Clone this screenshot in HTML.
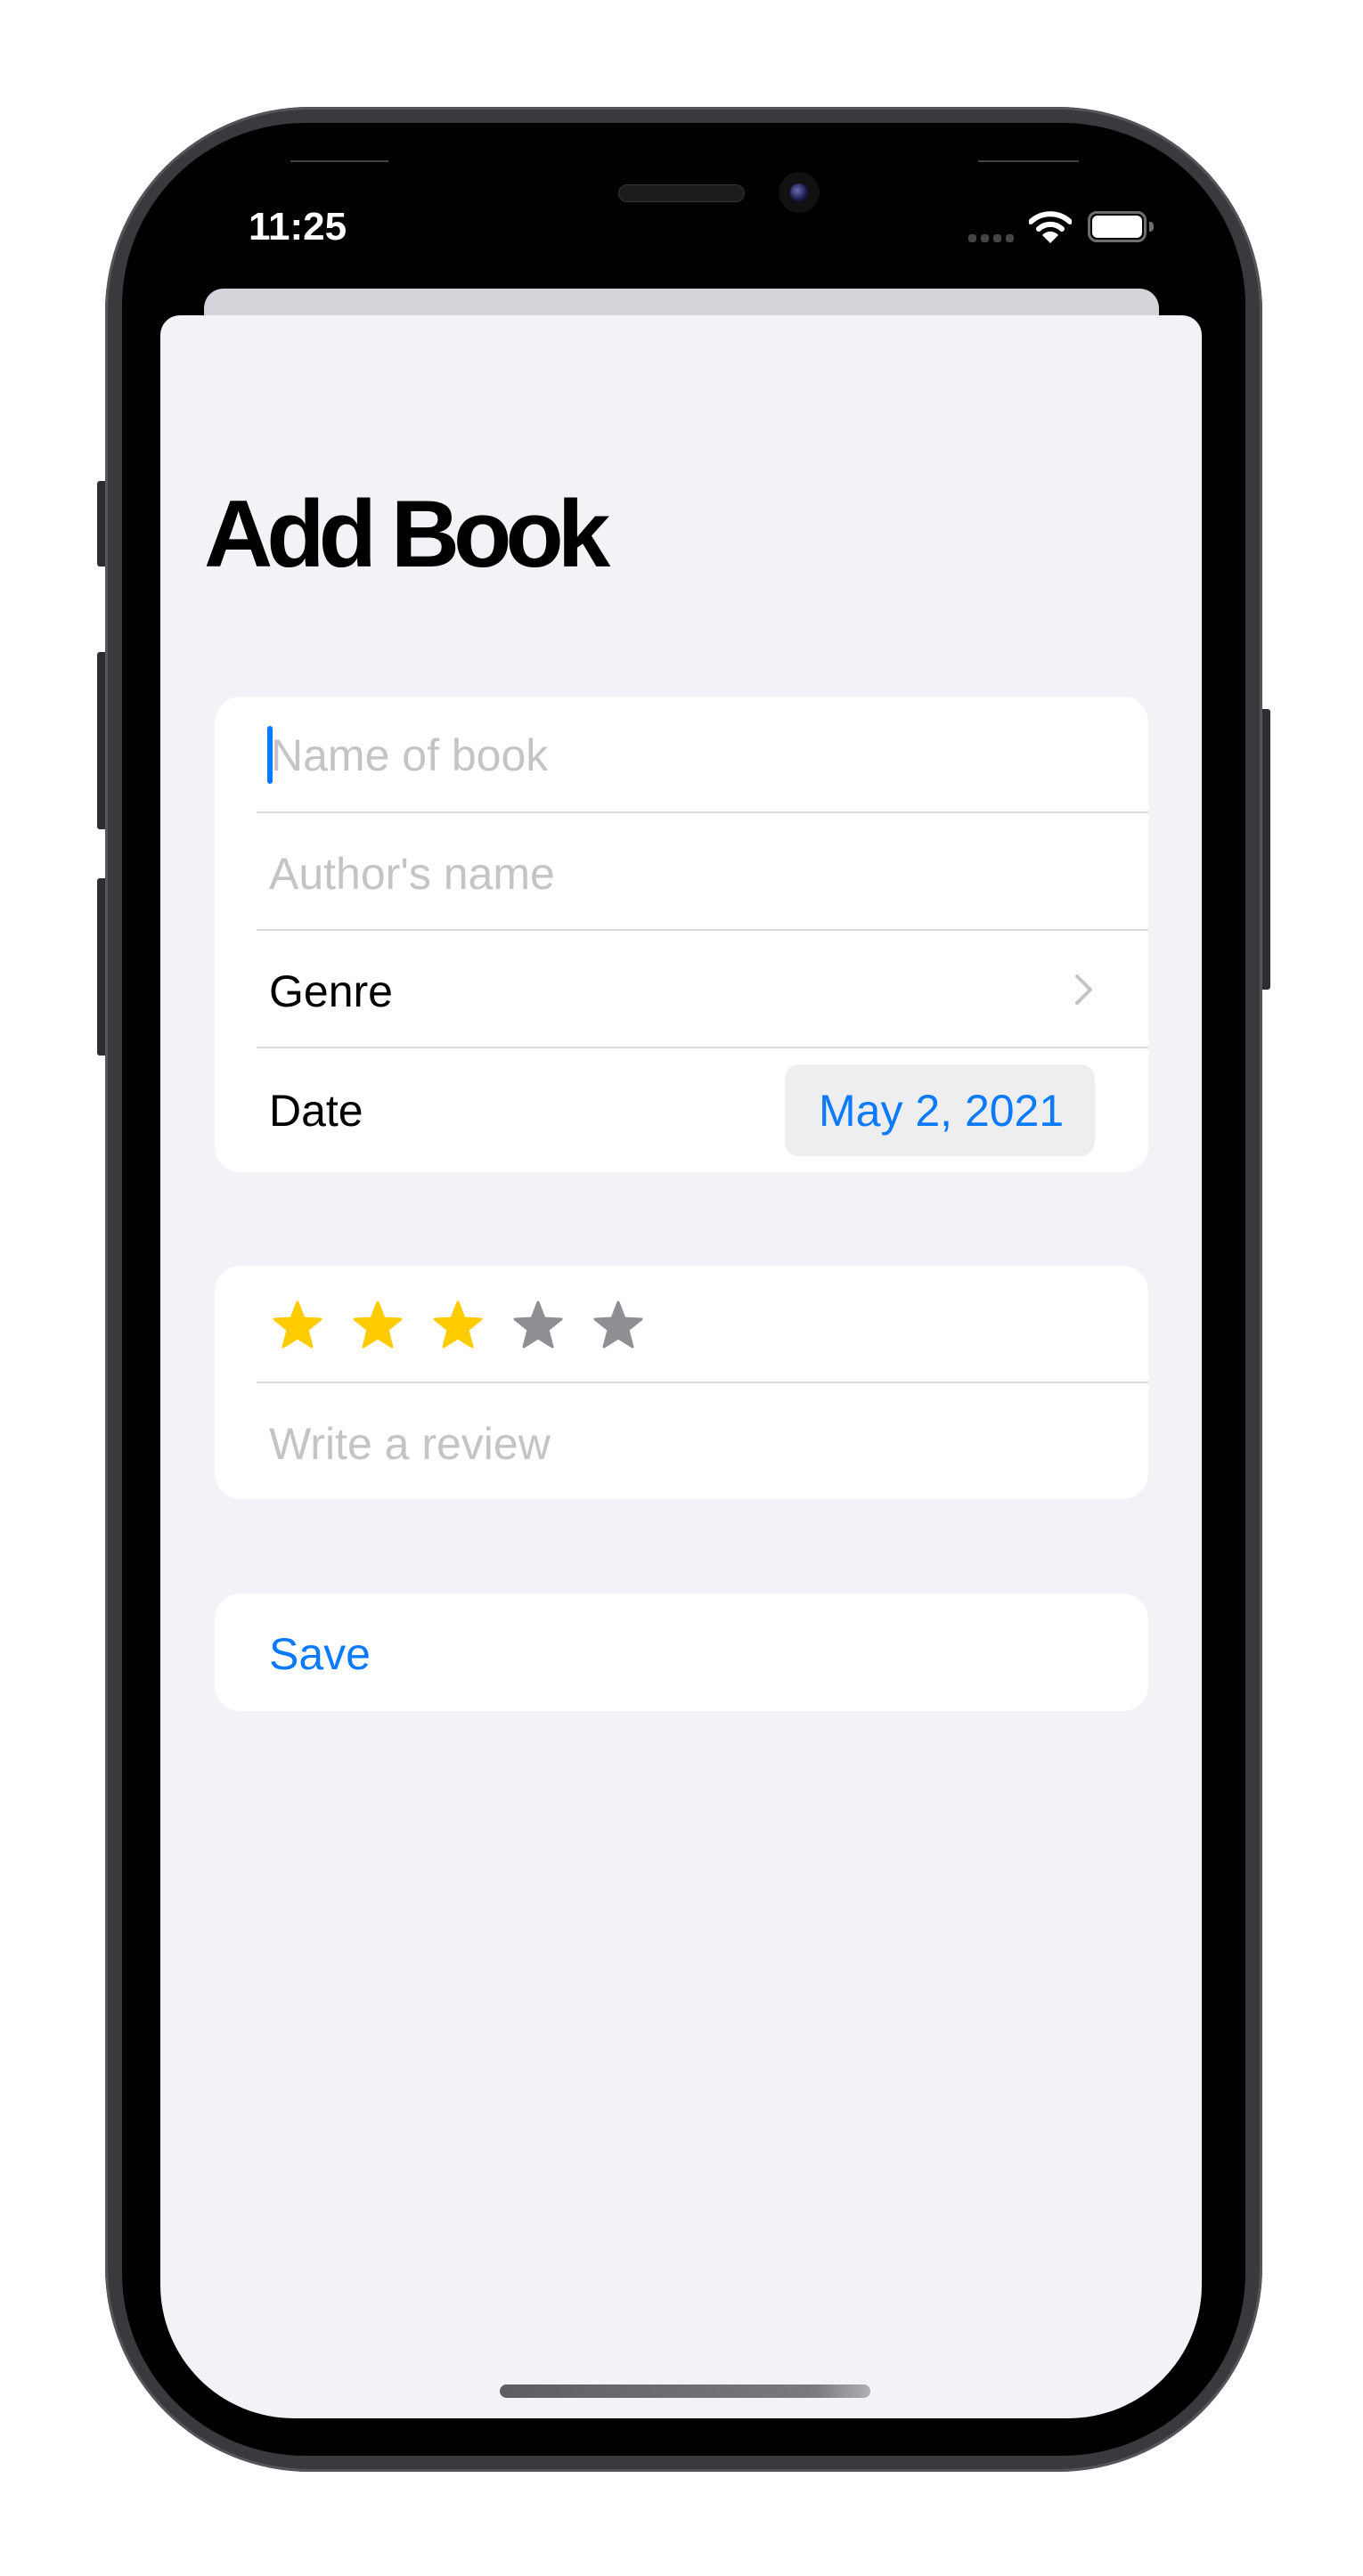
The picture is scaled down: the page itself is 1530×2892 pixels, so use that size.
<!DOCTYPE html>
<html><head><meta charset="utf-8"><style>
*{margin:0;padding:0;box-sizing:border-box}
body{width:1530px;height:2892px;background:#fff;position:relative;overflow:hidden;font-family:"Liberation Sans",sans-serif}
.abs{position:absolute}
.phone{left:118px;top:120px;width:1299px;height:2655px;border-radius:230px;background:#3a3a3e;box-shadow:inset 0 0 0 3px #55555a}
.screen{left:137px;top:138px;width:1261px;height:2619px;border-radius:205px;background:#000}
.btn{background:#2e2e31;border-radius:3px}
.card{position:absolute;left:241px;width:1048px;background:#fff;border-radius:29px}
.sep{position:absolute;left:47px;right:0;height:2px;background:#dcdcdf}
.t{position:absolute;left:61px;font-size:50px;line-height:60px;transform:translateY(-30px);white-space:nowrap}
.ph{color:#c4c4c7}
</style></head><body>
<div class="abs btn" style="left:109px;top:540px;width:12px;height:96px"></div>
<div class="abs btn" style="left:109px;top:732px;width:12px;height:199px"></div>
<div class="abs btn" style="left:109px;top:986px;width:12px;height:199px"></div>
<div class="abs btn" style="left:1414px;top:796px;width:12px;height:315px"></div>
<div class="abs phone"></div>
<div class="abs screen"></div>
<div class="abs" style="left:326px;top:180px;width:110px;height:2px;background:#444"></div>
<div class="abs" style="left:1098px;top:180px;width:113px;height:2px;background:#444"></div>
<div class="abs" style="left:694px;top:207px;width:142px;height:20px;border-radius:10px;background:#1c1c1e;border:1px solid #333"></div>
<div class="abs" style="left:874px;top:193px;width:46px;height:46px;border-radius:50%;background:#111"></div>
<div class="abs" style="left:887px;top:206px;width:20px;height:20px;border-radius:50%;background:radial-gradient(circle at 40% 40%,#6a6ab0,#1a1a4a 60%,#0a0a20)"></div>
<div class="abs" style="left:279px;top:230px;color:#fff;font-weight:bold;font-size:44px;line-height:50px">11:25</div>
<div class="abs" style="left:1087px;top:263px;width:9px;height:9px;border-radius:3px;background:#444;box-shadow:14px 0 0 #444,28px 0 0 #444,42px 0 0 #444"></div>
<svg class="abs" style="left:1155px;top:237px" width="48" height="36" viewBox="0 0 48 36">
<path d="M2 12 A32 32 0 0 1 46 12" stroke="#fff" stroke-width="6" fill="none" stroke-linecap="round"/>
<path d="M11 20 A19 19 0 0 1 37 20" stroke="#fff" stroke-width="6" fill="none" stroke-linecap="round"/>
<path d="M15 27 L24 36 L33 27 A12 12 0 0 0 15 27Z" fill="#fff"/>
</svg>
<div class="abs" style="left:1221px;top:237px;width:66px;height:35px;border:3px solid #6e6e6e;border-radius:10px;padding:2px"><div style="width:100%;height:100%;background:#fff;border-radius:6px"></div></div>
<div class="abs" style="left:1290px;top:249px;width:5px;height:11px;border-radius:0 4px 4px 0;background:#6e6e6e"></div>
<div class="abs" style="left:229px;top:324px;width:1072px;height:120px;border-radius:22px;background:#d5d4da"></div>
<div class="abs" style="left:180px;top:354px;width:1169px;height:2361px;border-radius:22px 22px 150px 150px;background:#f2f2f7"></div>
<div class="abs" style="left:229px;top:539px;font-weight:bold;font-size:107px;letter-spacing:-7px;line-height:120px;color:#000">Add Book</div>
<div class="card" style="top:782px;height:534px">
<div class="abs" style="left:59px;top:33px;width:6px;height:65px;border-radius:3px;background:#0a7aff"></div>
<div class="t ph" style="top:66px;left:63px">Name of book</div>
<div class="sep" style="top:129px"></div>
<div class="t ph" style="top:199px">Author's name</div>
<div class="sep" style="top:261px"></div>
<div class="t" style="top:331px;color:#000">Genre</div>
<svg class="abs" style="left:965px;top:311px" width="22" height="36" viewBox="0 0 22 36"><path d="M3 3 L18 18 L3 33" stroke="#c4c4c7" stroke-width="4" fill="none" stroke-linecap="round" stroke-linejoin="round"/></svg>
<div class="sep" style="top:393px"></div>
<div class="t" style="top:465px;color:#000">Date</div>
<div class="abs" style="left:640px;top:413px;width:348px;height:103px;border-radius:16px;background:#eeeef0"></div>
<div class="t" style="top:465px;left:678px;color:#0a7aff">May 2, 2021</div>
</div>
<div class="card" style="top:1421px;height:262px">
<svg class="abs" style="left:65px;top:39px" width="430" height="56" viewBox="0 0 430 56">
<defs><path id="s" d="M28 2 L35 20 L54 21 L39 33 L44 52 L28 42 L12 52 L17 33 L2 21 L21 20Z" stroke-linejoin="round"/></defs>
<use href="#s" fill="#ffcc00" stroke="#ffcc00" stroke-width="3"/>
<use href="#s" x="90" fill="#ffcc00" stroke="#ffcc00" stroke-width="3"/>
<use href="#s" x="180" fill="#ffcc00" stroke="#ffcc00" stroke-width="3"/>
<use href="#s" x="270" fill="#8e8e93" stroke="#8e8e93" stroke-width="3"/>
<use href="#s" x="360" fill="#8e8e93" stroke="#8e8e93" stroke-width="3"/>
</svg>
<div class="sep" style="top:130px"></div>
<div class="t ph" style="top:200px">Write a review</div>
</div>
<div class="card" style="top:1789px;height:132px">
<div class="t" style="top:68px;color:#0a7aff">Save</div>
</div>
<div class="abs" style="left:561px;top:2677px;width:416px;height:15px;border-radius:8px;background:linear-gradient(90deg,#5e5e62,#7a7a7e 85%,#b0b0b4)"></div>
</body></html>
